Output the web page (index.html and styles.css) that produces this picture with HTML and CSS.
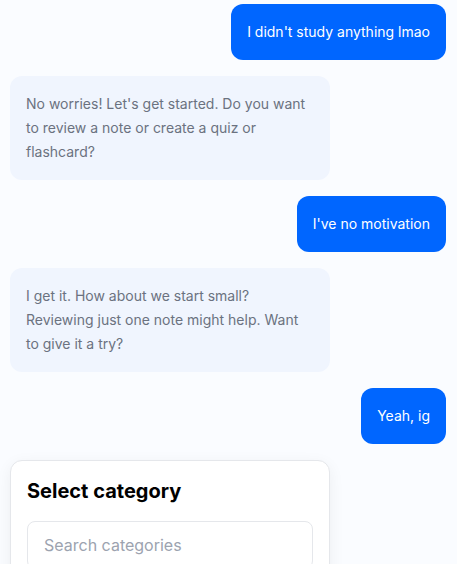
FILE: index.html
```html
<!DOCTYPE html>
<html lang="en">
<head>
<meta charset="utf-8">
<title>Chat</title>
<link rel="stylesheet" href="styles.css">
</head>
<body>
<div class="chat">
  <div class="msg user">I didn't study anything lmao</div>
  <div class="msg bot">No worries! Let's get started. Do you want to review a note or create a quiz or flashcard?</div>
  <div class="msg user">I've no motivation</div>
  <div class="msg bot">I get it. How about we start small? Reviewing just one note might help. Want to give it a try?</div>
  <div class="msg user">Yeah, ig</div>
  <div class="card">
    <h2 class="card-title">Select category</h2>
    <input class="search" type="text" placeholder="Search categories">
  </div>
</div>
</body>
</html>
```

FILE: styles.css
```css
html, body {
  margin: 0;
  background: #fafcff;
}
body {
  font-family: Inter, "Noto Sans", sans-serif;
  font-size: 14px;
  line-height: 24px;
}
.chat {
  display: flex;
  flex-direction: column;
  gap: 16px;
  padding: 4px 11px 0 10px;
}
.msg {
  padding: 16px;
  border-radius: 12px;
  box-sizing: border-box;
}
.user {
  align-self: flex-end;
  background: #0066ff;
  color: #ffffff;
}
.bot {
  align-self: flex-start;
  width: 320px;
  background: #f0f5fe;
  color: #6b7280;
}
.card {
  width: 320px;
  box-sizing: border-box;
  background: #ffffff;
  border: 1px solid #e5e7eb;
  border-radius: 12px;
  padding: 16px;
  box-shadow: 0 4px 16px rgba(0, 0, 0, 0.06);
}
.card-title {
  margin: 0 0 16px;
  font-size: 20px;
  line-height: 28px;
  font-weight: 700;
  color: #000000;
}
.search {
  display: block;
  width: 100%;
  box-sizing: border-box;
  height: 48px;
  padding: 0 16px;
  border: 1px solid #e5e7eb;
  border-radius: 8px;
  font-family: Inter, "Noto Sans", sans-serif;
  font-size: 16px;
  color: #111827;
  background: #ffffff;
  outline: none;
}
.search::placeholder {
  color: #9ca3af;
}
```
